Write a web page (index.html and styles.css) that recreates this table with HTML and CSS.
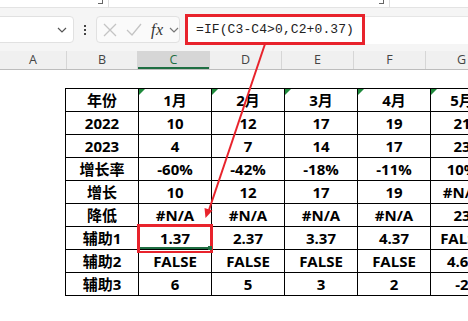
FILE: index.html
```html
<!DOCTYPE html>
<html lang="zh-CN">
<head>
    <meta charset="UTF-8">
    <title>辅助列</title>
    <link rel="stylesheet" href="styles.css">
</head>
<body>
    <!-- bottom edge of the ribbon -->
    <div class="ribbon-tail">
        <div class="ribbon-group first"><span class="group-label">Format</span><span class="launcher"></span></div>
        <div class="ribbon-group second"><span class="launcher"></span></div>
    </div>

    <!-- Name box + formula bar -->
    <div class="formula-row">
        <div class="name-box">
            <svg class="chevron" width="10" height="6" viewBox="0 0 10 6"><path d="M1 1l4 4 4-4" fill="none" stroke="#555" stroke-width="1.2"/></svg>
        </div>
        <div class="grip"><i></i><i></i><i></i></div>
        <div class="func-box">
            <svg width="14" height="14" viewBox="0 0 14 14"><path d="M1 1l12 12M13 1L1 13" stroke="#c4c4c4" stroke-width="1.3"/></svg>
            <svg width="16" height="14" viewBox="0 0 16 14"><path d="M1 7l5 5L15 1" fill="none" stroke="#c4c4c4" stroke-width="1.3"/></svg>
            <span class="fx">fx</span>
            <svg width="10" height="6" viewBox="0 0 10 6"><path d="M1 1l4 4 4-4" fill="none" stroke="#777" stroke-width="1.2"/></svg>
        </div>
        <div class="formula-field">
            <span class="formula">=IF(C3-C4&gt;0,C2+0.37)</span>
        </div>
    </div>

    <!-- Column letters -->
    <div class="col-heads">
        <div class="col-head col-a">A</div>
        <div class="col-head">B</div>
        <div class="col-head current">C</div>
        <div class="col-head">D</div>
        <div class="col-head">E</div>
        <div class="col-head">F</div>
        <div class="col-head">G</div>
    </div>

    <div class="sheet">
        <table class="data">
            <tr class="months">
                <td>年份</td><td class="flag">1月</td><td class="flag">2月</td><td class="flag">3月</td><td class="flag">4月</td><td class="flag">5月</td>
            </tr>
            <tr><td>2022</td><td>10</td><td>12</td><td>17</td><td>19</td><td>21</td></tr>
            <tr><td>2023</td><td>4</td><td>7</td><td>14</td><td>17</td><td>23</td></tr>
            <tr><td>增长率</td><td>-60%</td><td>-42%</td><td>-18%</td><td>-11%</td><td>10%</td></tr>
            <tr><td>增长</td><td>10</td><td>12</td><td>17</td><td>19</td><td>#N/A</td></tr>
            <tr><td>降低</td><td>#N/A</td><td>#N/A</td><td>#N/A</td><td>#N/A</td><td>23</td></tr>
            <tr><td>辅助1</td><td class="active">1.37<span class="fill-handle"></span></td><td>2.37</td><td>3.37</td><td>4.37</td><td>FALSE</td></tr>
            <tr><td>辅助2</td><td>FALSE</td><td>FALSE</td><td>FALSE</td><td>FALSE</td><td>4.63</td></tr>
            <tr><td>辅助3</td><td>6</td><td>5</td><td>3</td><td>2</td><td>-2</td></tr>
        </table>
    </div>

    <!-- callout arrow from the formula to its cell -->
    <svg class="callout" width="468" height="321" viewBox="0 0 468 321">
        <line x1="265" y1="44" x2="209" y2="210" stroke="#e8232c" stroke-width="2"/>
        <path d="M205.5 218 L204.5 208 L212.5 210.5 Z" fill="#e8232c"/>
    </svg>
</body>
</html>
```

FILE: styles.css
```css
html, body {
    margin: 0;
    padding: 0;
    width: 468px;
    height: 321px;
    overflow: hidden;
    background: #fff;
    font-family: "Open Sans", "Noto Sans CJK SC", sans-serif;
}

body {
    position: relative;
}

/* Ribbon edge */
.ribbon-tail {
    display: flex;
    height: 7px;
    overflow: hidden;
    background: #fff;
    border-bottom: 1px solid #e3e3e3;
}

.ribbon-group {
    position: relative;
    border-right: 1px solid #dedede;
    height: 7px;
}

.ribbon-group.first {
    width: 108px;
}

.ribbon-group.second {
    width: 280px;
}

.group-label {
    display: block;
    margin: -11px 0 0 17px;
    font: 12px "Open Sans", sans-serif;
    color: #444;
    line-height: 12px;
}

.launcher {
    position: absolute;
    right: 5px;
    top: 0;
    width: 4px;
    height: 3px;
    border-right: 1px solid #666;
    border-bottom: 1px solid #666;
}

/* Formula bar */
.formula-row {
    display: flex;
    align-items: center;
    height: 43px;
    background: #f5f5f5;
}

.name-box {
    display: flex;
    align-items: center;
    justify-content: flex-end;
    box-sizing: border-box;
    margin-left: -10px;
    width: 84px;
    height: 27px;
    padding-right: 6px;
    background: #fff;
    border: 1px solid #e1e1e1;
    border-radius: 4px;
}

.grip {
    display: flex;
    flex-direction: column;
    align-items: center;
    gap: 2px;
    width: 22px;
}

.grip i {
    width: 2px;
    height: 2px;
    background: #444;
}

.func-box {
    display: flex;
    align-items: center;
    gap: 9px;
    box-sizing: border-box;
    width: 84px;
    height: 27px;
    padding-left: 6px;
    background: #fafafa;
    border: 1px solid #e1e1e1;
    border-radius: 4px;
}

.fx {
    font: italic 16px "Liberation Serif", serif;
    color: #333;
    margin-right: -4px;
    letter-spacing: 0.5px;
}

.formula-field {
    flex: 1;
    display: flex;
    align-items: center;
    height: 27px;
    margin-left: 5px;
    background: #fff;
    border-top: 1px solid #e6e6e6;
}

.formula {
    display: flex;
    align-items: center;
    height: 25px;
    margin-top: -1px;
    padding: 0 8px;
    border: 3px solid #e8232c;
    font: 13px "Liberation Mono", monospace;
    letter-spacing: 0.1px;
    color: #222;
}

/* Column headers */
.col-heads {
    display: flex;
    height: 18px;
    background: #f0f0f0;
    border-bottom: 1px solid #bdbdbd;
}

.col-head {
    flex: none;
    box-sizing: border-box;
    width: 72px;
    border-right: 1px solid #d6d6d6;
    text-align: center;
    font-size: 12.5px;
    line-height: 18px;
    color: #444;
}

.col-a {
    width: 67px;
}

.col-head:nth-child(2) {
    width: 71px;
}

.col-head.current {
    background: #d6d6d6;
    color: #1e6e42;
    box-shadow: inset 0 -2px 0 #1e6e42;
}

/* Grid */
.sheet {
    padding: 18px 0 0 65px;
}

.data {
    table-layout: fixed;
    width: 433px;
    border-collapse: collapse;
}

.data td {
    width: 72px;
    height: 22px;
    padding: 0;
    border: 1px solid #000;
    text-align: center;
    font-size: 15px;
    font-weight: bold;
    line-height: 20px;
    color: #000;
    white-space: nowrap;
}

.data td:last-child {
    text-indent: -10px;
}

.data td.flag {
    position: relative;
}

/* green error indicator */
.data td.flag::before {
    content: "";
    position: absolute;
    top: 0;
    left: 0;
    border-top: 6px solid #1f8a3c;
    border-right: 6px solid transparent;
}

.data td.active {
    position: relative;
    box-shadow: inset 0 -2px 0 #1e6e42;
}

.data td.active::after {
    content: "";
    position: absolute;
    top: -3px;
    left: -2px;
    right: -2px;
    bottom: -4px;
    border: 3px solid #e8232c;
    border-bottom-width: 2px;
}

.fill-handle {
    position: absolute;
    right: -1px;
    bottom: -1px;
    width: 4px;
    height: 4px;
    background: #1e6e42;
    z-index: 1;
}

/* Annotation */
.callout {
    position: absolute;
    left: 0;
    top: 0;
    pointer-events: none;
}
```
